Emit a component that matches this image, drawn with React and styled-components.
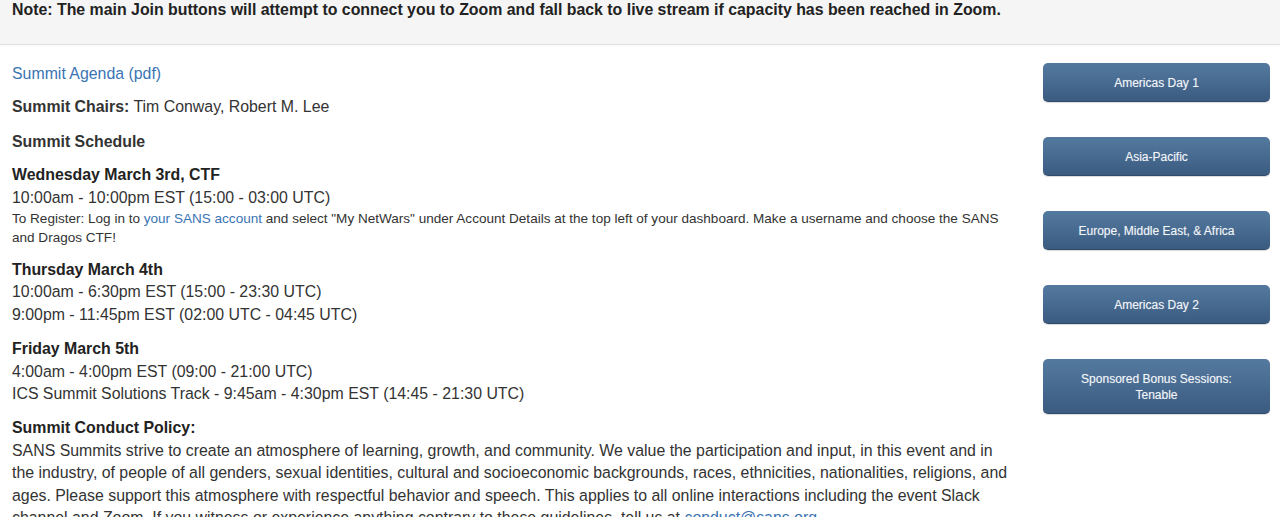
import React from 'react';
import styled, { createGlobalStyle } from 'styled-components';

const GlobalStyle = createGlobalStyle`
  html, body {
    margin: 0;
    padding: 0;
    background: #fff;
  }
  body {
    font-family: "Liberation Sans", Arial, Helvetica, sans-serif;
    font-size: 15.88px;
    line-height: 22.5px;
    color: #333;
  }
`;

const Notice = styled.div`
  background: #f5f5f5;
  border-bottom: 1px solid #e2e2e2;
  box-shadow: 0 1px 2px rgba(0, 0, 0, 0.04);
  padding: 0 12px 24px;
  font-weight: bold;
  line-height: 20px;
  color: #222;
`;

const Page = styled.div`
  display: flex;
  align-items: flex-start;
  padding: 18px 10px 0 12px;
`;

const Main = styled.div`
  flex: 1;
  min-width: 0;
`;

const Sidebar = styled.aside`
  width: 227px;
  margin-left: 31px;
  display: flex;
  flex-direction: column;
  gap: 35px;
`;

const Line = styled.p`
  margin: 0 0 ${(p) => p.$gap ?? 0}px;
`;

const Section = styled.div`
  margin-bottom: 11.8px;
`;

const Heading = styled.div`
  font-weight: bold;
  color: #222;
`;

const Small = styled.p`
  margin: 0;
  font-size: 13.55px;
  line-height: 19px;
`;

const Link = styled.a`
  color: #3a74b3;
  text-decoration: none;
`;

const JoinButton = styled.a`
  display: block;
  box-sizing: border-box;
  padding: 12px 20px 10px;
  border-radius: 5px;
  border-bottom: 1px solid #2f4b6b;
  background: linear-gradient(to bottom, #54799f 0%, #46698f 55%, #3b5b80 100%);
  box-shadow: 0 1px 1px rgba(0, 0, 0, 0.15);
  color: #f3f6f9;
  font-size: 12px;
  line-height: 16px;
  text-align: center;
  text-decoration: none;
  text-shadow: 0 0 1px rgba(255, 255, 255, 0.35);
  cursor: pointer;
`;

const buttons = [
  'Americas Day 1',
  'Asia-Pacific',
  'Europe, Middle East, & Africa',
  'Americas Day 2',
  'Sponsored Bonus Sessions: Tenable',
];

export default function App() {
  return (
    <>
      <GlobalStyle />
      <Notice>
        Note: The main Join buttons will attempt to connect you to Zoom and fall back to live
        stream if capacity has been reached in Zoom.
      </Notice>
      <Page>
        <Main>
          <Line $gap={10.5}>
            <Link href="#">Summit Agenda (pdf)</Link>
          </Line>
          <Line $gap={12.5}>
            <strong>Summit Chairs:</strong> Tim Conway, Robert M. Lee
          </Line>
          <Line $gap={10.5}>
            <strong>Summit Schedule</strong>
          </Line>

          <Section>
            <Heading>Wednesday March 3rd, CTF</Heading>
            <Line>10:00am - 10:00pm EST (15:00 - 03:00 UTC)</Line>
            <Small>
              To Register: Log in to <Link href="#">your SANS account</Link> and select "My
              NetWars" under Account Details at the top left of your dashboard. Make a username
              and choose the SANS and Dragos CTF!
            </Small>
          </Section>

          <Section>
            <Heading>Thursday March 4th</Heading>
            <Line>10:00am - 6:30pm EST (15:00 - 23:30 UTC)</Line>
            <Line>9:00pm - 11:45pm EST (02:00 UTC - 04:45 UTC)</Line>
          </Section>

          <Section>
            <Heading>Friday March 5th</Heading>
            <Line>4:00am - 4:00pm EST (09:00 - 21:00 UTC)</Line>
            <Line>ICS Summit Solutions Track - 9:45am - 4:30pm EST (14:45 - 21:30 UTC)</Line>
          </Section>

          <Section>
            <Heading>Summit Conduct Policy:</Heading>
            <Line>
              SANS Summits strive to create an atmosphere of learning, growth, and community. We
              value the participation and input, in this event and in the industry, of people of
              all genders, sexual identities, cultural and socioeconomic backgrounds, races,
              ethnicities, nationalities, religions, and ages. Please support this atmosphere
              with respectful behavior and speech. This applies to all online interactions
              including the event Slack channel and Zoom. If you witness or experience anything
              contrary to these guidelines, tell us at{' '}
              <Link href="#">conduct@sans.org</Link>.
            </Line>
          </Section>
        </Main>

        <Sidebar>
          {buttons.map((label) => (
            <JoinButton key={label} href="#">
              {label}
            </JoinButton>
          ))}
        </Sidebar>
      </Page>
    </>
  );
}
